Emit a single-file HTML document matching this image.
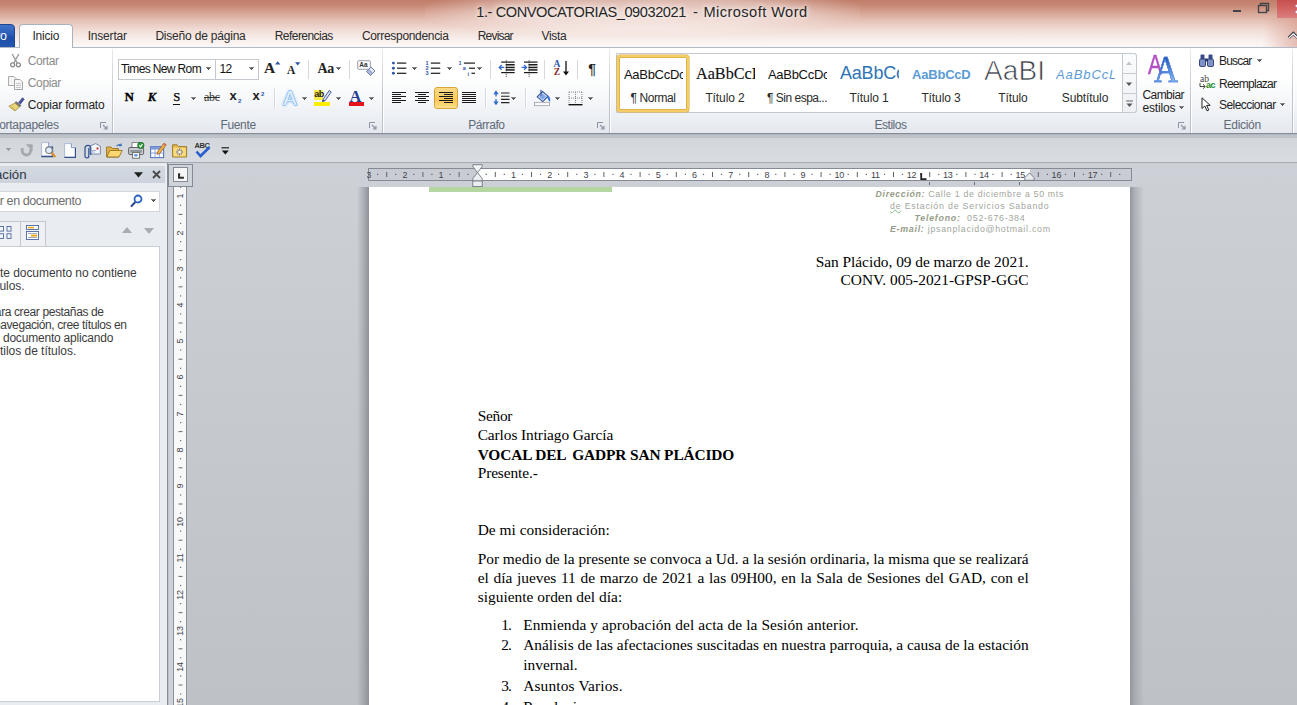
<!DOCTYPE html><html lang="es"><head><meta charset="utf-8"><title>1.- CONVOCATORIAS_09032021 - Microsoft Word</title><style>
*{box-sizing:border-box}
html,body{margin:0;padding:0}
body{width:1297px;height:705px;overflow:hidden;position:relative;background:#c8cbd1;font-family:"Liberation Sans",sans-serif;font-size:12px;color:#1e1e1e}
.a{position:absolute;white-space:nowrap}
.t{position:absolute;white-space:nowrap;line-height:14px;letter-spacing:-0.15px;margin-top:.4px}
.gl{position:absolute;white-space:nowrap;line-height:14px;color:#5f6a78;letter-spacing:0.1px}
.sep{position:absolute;width:1px;background:#d5d9df;box-shadow:1px 0 0 #fff}
.gsep{position:absolute;top:49px;width:1px;height:84px;background:linear-gradient(#e8ebef,#c3c8d0 50%,#b9bfc8);box-shadow:1px 0 0 #fff}
.dd{position:absolute;width:5px;height:3px;background:linear-gradient(#858585 0,#858585 1px,#555 1px);clip-path:polygon(0 0,5px 0,5px 1px,4px 1px,4px 2px,3px 2px,3px 3px,2px 3px,2px 2px,1px 2px,1px 1px,0 1px)}
.doc{position:absolute;white-space:nowrap;font-family:"Liberation Serif",serif;font-size:15.4px;line-height:20px;color:#000}
.hd{position:absolute;white-space:nowrap;font-family:"Liberation Sans",sans-serif;font-size:8.8px;line-height:12px;color:#a2a69e}
.hd b{font-style:italic;color:#969c88}
.rn{position:absolute;font-size:9px;line-height:10px;color:#3f434d;width:20px;text-align:center;letter-spacing:-0.2px}
.vn{position:absolute;font-size:9px;line-height:10px;color:#3f434d;width:20px;height:10px;text-align:center;transform:rotate(-90deg);transform-origin:50% 50%;letter-spacing:-0.2px}
.sty{position:absolute;top:55px;width:72px;height:56px;overflow:hidden}
.sty .s{position:absolute;left:7px;white-space:nowrap;overflow:hidden;width:59px}
.sty .n{position:absolute;left:0;width:72px;text-align:center;top:90px;line-height:14px;white-space:nowrap;letter-spacing:-0.1px;color:#2a2a2a}
.nav{position:absolute;white-space:nowrap;line-height:13px;color:#3c3c3c;font-size:12px;letter-spacing:-0.1px}
</style></head><body>
<div class="a" style="left:0;top:0;width:1297px;height:48px;background:linear-gradient(#c07d6a 0,#c88a77 6px,#d7a595 13px,#e6c3b8 21px,#f1ddd6 30px,#f8eeeb 39px,#fcf8f7 47px)"></div>
<div class="a" style="left:425px;top:-12px;width:435px;height:48px;background:radial-gradient(ellipse at center,rgba(255,255,255,.6) 0,rgba(255,255,255,.42) 45%,rgba(255,255,255,0) 75%)"></div>
<div class="a" style="left:1262px;top:18px;width:35px;height:29px;background:linear-gradient(90deg,rgba(214,150,135,0),rgba(214,150,135,.6))"></div>
<div class="a" style="left:476.3px;top:2px;font-size:14.6px;line-height:20px;color:#262626;text-shadow:0 0 5px rgba(255,255,255,.95),0 0 9px rgba(255,255,255,.7);letter-spacing:-0.435px;">1.- CONVOCATORIAS_09032021</div>
<div class="a" style="left:693px;top:2px;font-size:14.6px;line-height:20px;color:#262626;text-shadow:0 0 5px rgba(255,255,255,.95),0 0 9px rgba(255,255,255,.7)">-</div>
<div class="a" style="left:703.5px;top:2px;font-size:14.6px;line-height:20px;color:#262626;text-shadow:0 0 5px rgba(255,255,255,.95),0 0 9px rgba(255,255,255,.7);letter-spacing:0.439px;">Microsoft Word</div>
<div class="a" style="left:1277px;top:0;width:20px;height:18px;background:linear-gradient(#c74f4e,#d26766 55%,#d98080)"></div>
<div class="a" style="left:1293.5px;top:2px;font-size:14px;line-height:14px;color:#fff;font-weight:bold">✕</div>
<svg class="a" style="left:1230px;top:0" width="45" height="18" viewBox="0 0 45 18"><rect x="3" y="10" width="8" height="2" fill="#3f4348"/><rect x="28.5" y="5.5" width="8" height="7" fill="none" stroke="#3f4348" stroke-width="1.3"/><path d="M30.5 5.5V3.5H38.5V10.5H36.5" fill="none" stroke="#3f4348" stroke-width="1.3"/></svg>
<svg class="a" style="left:1287px;top:31px" width="10" height="9" viewBox="0 0 10 9"><path d="M1.8 6.8L6.3 2.4L10.8 6.8" fill="none" stroke="#3a3f46" stroke-width="3"/><path d="M2.2 6.7L6.3 2.8L10.4 6.7" fill="none" stroke="#fff" stroke-width="1.3"/></svg>
<div class="a" style="left:-30px;top:24px;width:45px;height:24px;border-radius:4px 4px 0 0;background:linear-gradient(#3f72c9,#2a5cb8 45%,#1d4ea6 55%,#2357b0);border:1px solid #1b4690"></div>
<div class="a" style="right:1290.3px;top:28.5px;font-size:12.5px;line-height:14px;color:#fff;letter-spacing:-.2px">Archivo</div>
<div class="a" style="left:0;top:47px;width:1297px;height:87px;background:linear-gradient(#fff 0,#fff 28px,#f4f6f9 55px,#e9ecf1 75px,#e4e8ee 86px);border-top:1px solid #b0b9c5;border-bottom:1px solid #868d97"></div>
<div class="a" style="left:19px;top:24px;width:54px;height:24px;background:#fff;border:1px solid #a9b2bf;border-bottom:none;border-radius:4px 4px 0 0"></div>
<div class="t" style="left:32.4px;top:29px;color:#2b2b2b;letter-spacing:-0.203px;">Inicio</div>
<div class="t" style="left:87.7px;top:29px;color:#2b2b2b;letter-spacing:-0.198px;">Insertar</div>
<div class="t" style="left:155.4px;top:29px;color:#2b2b2b;letter-spacing:-0.200px;">Diseño de página</div>
<div class="t" style="left:274.7px;top:29px;color:#2b2b2b;letter-spacing:-0.539px;">Referencias</div>
<div class="t" style="left:361.9px;top:29px;color:#2b2b2b;letter-spacing:-0.313px;">Correspondencia</div>
<div class="t" style="left:477.7px;top:29px;color:#2b2b2b;letter-spacing:-0.798px;">Revisar</div>
<div class="t" style="left:541.4px;top:29px;color:#2b2b2b;letter-spacing:-0.294px;">Vista</div>
<div class="t" style="left:27.8px;top:54px;color:#8c8c8c;letter-spacing:-0.424px;">Cortar</div>
<div class="t" style="left:27.8px;top:76px;color:#8c8c8c;letter-spacing:-0.377px;">Copiar</div>
<div class="t" style="left:27.8px;top:98px;letter-spacing:-0.191px;">Copiar formato</div>
<div class="gl" style="right:1238.4px;top:118px;letter-spacing:-.3px">Portapapeles</div>
<svg class="a" style="left:9px;top:53px" width="13" height="15" viewBox="0 0 13 15"><path d="M3.2 1L8.2 10M9.8 1L4.8 10" stroke="#9a9a9a" stroke-width="1.4" fill="none"/><circle cx="3.6" cy="11.8" r="2" fill="none" stroke="#8a8a8a" stroke-width="1.3"/><circle cx="9.4" cy="11.8" r="2" fill="none" stroke="#8a8a8a" stroke-width="1.3"/></svg>
<svg class="a" style="left:8px;top:76px" width="16" height="14" viewBox="0 0 16 14"><path d="M.5 .5H6L8.5 3V9.5H.5Z" fill="#f4f4f4" stroke="#aaa"/><path d="M6.5 3.5H12L14.5 6V13.5H6.5Z" fill="#f7f7f7" stroke="#a4a4a4"/><path d="M8 7.5H13M8 9.5H13M8 11.5H13" stroke="#bbb" stroke-width=".8"/></svg>
<svg class="a" style="left:8px;top:97px" width="17" height="15" viewBox="0 0 17 15"><path d="M10.5 5.5L14.5 .8L16.2 2.2L12.5 7Z" fill="#4b55a8" stroke="#2f3575" stroke-width=".6"/><path d="M8 4.5L13 8.5L11.5 10L7 6Z" fill="#777" stroke="#444" stroke-width=".5"/><path d="M7 6L11.3 10L7 14L.8 9.3Z" fill="#e9d27a" stroke="#9b8432" stroke-width=".7"/><path d="M3 9.5L7 12.8" stroke="#c4aa4e" stroke-width=".8"/></svg>
<svg class="a" style="left:100.0px;top:122px" width="8" height="8" viewBox="0 0 8 8"><path d="M.5 6V.5H6" fill="none" stroke="#8b93a0"/><path d="M3 3L6.5 6.5M7 3.8V7H3.8" fill="none" stroke="#8b93a0" stroke-width="1.1"/></svg>
<div class="gsep" style="left:112px"></div>
<div class="a" style="left:118px;top:58.5px;width:98px;height:21px;background:#fff;border:1px solid #c3c8cf"></div>
<div class="a" style="left:215px;top:58.5px;width:44px;height:21px;background:#fff;border:1px solid #c3c8cf"></div>
<div class="t" style="left:121px;top:62px;color:#111;letter-spacing:-0.633px;">Times New Rom</div>
<div class="t" style="left:219.5px;top:62px;color:#111;letter-spacing:-0.780px;">12</div>
<div class="dd" style="left:206px;top:67px"></div><div class="dd" style="left:249px;top:67px"></div>
<div class="a" style="left:264px;top:59px;font-family:'Liberation Serif',serif;font-weight:bold;font-size:15.5px;line-height:18px;color:#222">A</div>
<svg class="a" style="left:274.5px;top:60.5px" width="6" height="4"><path d="M0 3.5L2.7 .3L5.4 3.5Z" fill="#2d56a8"/></svg>
<div class="a" style="left:287px;top:62.5px;font-family:'Liberation Serif',serif;font-weight:bold;font-size:11.5px;line-height:14px;color:#222">A</div>
<svg class="a" style="left:295px;top:61.5px" width="6" height="4"><path d="M0 .3L2.7 3.5L5.4 .3Z" fill="#2d56a8"/></svg>
<div class="sep" style="left:308px;top:60px;height:19px"></div>
<div class="a" style="left:317.5px;top:60px;font-family:'Liberation Serif',serif;font-weight:bold;font-size:14px;line-height:17px;color:#222;letter-spacing:-.3px">Aa</div>
<div class="dd" style="left:336px;top:67px"></div>
<div class="sep" style="left:349px;top:60px;height:19px"></div>
<svg class="a" style="left:357px;top:60px" width="19" height="18" viewBox="0 0 19 18"><rect x=".7" y=".7" width="12.6" height="8.6" rx="1" fill="#fdfdfd" stroke="#8a93a5" stroke-width=".9"/><text x="2.3" y="7.3" font-family="Liberation Sans,sans-serif" font-size="6.5" font-weight="bold" fill="#333">Aa</text><path d="M9.5 11.5L14 7L18 11L13.5 15.5Z" fill="#e6ebf5" stroke="#5f6f96" stroke-width=".9"/><path d="M9.5 11.5L11.7 9.3L15.8 13.3L13.5 15.5Z" fill="#a9b8dc" stroke="#5f6f96" stroke-width=".6"/></svg>
<div class="a" style="left:124.8px;top:89.3px;font-family:'Liberation Serif',serif;font-weight:bold;font-size:12.6px;line-height:16px;color:#000;-webkit-text-stroke:.4px #000">N</div>
<div class="a" style="left:147.8px;top:89.3px;font-family:'Liberation Serif',serif;font-weight:bold;font-style:italic;font-size:12.6px;line-height:16px;color:#000;-webkit-text-stroke:.3px #000">K</div>
<div class="a" style="left:173.2px;top:89.3px;font-family:'Liberation Serif',serif;font-size:12.6px;line-height:16px;color:#000;-webkit-text-stroke:.25px #000;border-bottom:1px solid #111;height:15.6px">S</div>
<div class="dd" style="left:191px;top:97px"></div>
<div class="a" style="left:204px;top:89.5px;font-family:'Liberation Serif',serif;font-size:12px;line-height:15px;color:#333;text-decoration:line-through;letter-spacing:-.3px">abc</div>
<div class="a" style="left:229.5px;top:88px;font-weight:bold;font-size:13px;line-height:16px;color:#222">x</div><div class="a" style="left:238px;top:97.5px;font-weight:bold;font-size:6px;line-height:7px;color:#2d56a8">2</div>
<div class="a" style="left:252.5px;top:88px;font-weight:bold;font-size:13px;line-height:16px;color:#222">x</div><div class="a" style="left:261px;top:91px;font-weight:bold;font-size:6px;line-height:7px;color:#2d56a8">2</div>
<div class="sep" style="left:274px;top:88px;height:20px"></div>
<div class="a" style="left:283.3px;top:87px;font-size:20px;line-height:22px;color:#e4f0fd;-webkit-text-stroke:1px #5a9ce6;paint-order:stroke fill;text-shadow:0 0 2.5px #7fb8f5,0 0 3px #9ccbf8">A</div>
<div class="dd" style="left:302px;top:97px"></div>
<div class="a" style="left:314px;top:102px;width:16px;height:4px;background:#ffee00"></div>
<div class="a" style="left:314px;top:90px;width:9px;height:10px;background:#f7ec4a"></div><div class="a" style="left:314.3px;top:89px;font-size:9px;line-height:11px;color:#222;letter-spacing:-.5px;font-weight:bold">ab</div>
<svg class="a" style="left:321px;top:89px" width="11" height="13" viewBox="0 0 11 13"><path d="M2 10.5L8.2 1.5L10.2 3L4 11.8L1.5 12.5Z" fill="#dfe7f7" stroke="#33488a" stroke-width=".9"/><path d="M2 10.5L4 11.8L1.5 12.5Z" fill="#33488a"/></svg>
<div class="dd" style="left:336px;top:97px"></div>
<div class="a" style="left:349.5px;top:86.5px;font-family:'Liberation Serif',serif;font-weight:bold;font-size:16.5px;line-height:19px;color:#1f3d8c">A</div>
<div class="a" style="left:348.5px;top:102px;width:15.5px;height:4px;background:#e8121a"></div>
<div class="dd" style="left:369px;top:97px"></div>
<div class="gl" style="left:220.5px;top:118px;letter-spacing:-0.360px;">Fuente</div>
<svg class="a" style="left:369.0px;top:122px" width="8" height="8" viewBox="0 0 8 8"><path d="M.5 6V.5H6" fill="none" stroke="#8b93a0"/><path d="M3 3L6.5 6.5M7 3.8V7H3.8" fill="none" stroke="#8b93a0" stroke-width="1.1"/></svg>
<div class="gsep" style="left:381.5px"></div>
<svg class="a" style="left:390px;top:60px" width="18" height="16" viewBox="390 60 18 16"><g fill="#2d56a8"><circle cx="393.4" cy="63.1" r="1.45"/><circle cx="393.4" cy="68.2" r="1.45"/><circle cx="393.4" cy="73.3" r="1.45"/></g><rect x="397.0" y="62.5" width="9.3" height="1.2" fill="#1a1a1a"/><rect x="397.0" y="67.6" width="9.3" height="1.2" fill="#1a1a1a"/><rect x="397.0" y="72.7" width="9.3" height="1.2" fill="#1a1a1a"/></svg>
<div class="dd" style="left:412px;top:67px"></div>
<svg class="a" style="left:424px;top:59px" width="18" height="18" viewBox="424 59 18 18"><g font-family="Liberation Sans,sans-serif" font-size="5.6" font-weight="bold" fill="#2d56a8"><text x="425.6" y="65">1</text><text x="425.6" y="70.2">2</text><text x="425.6" y="75.4">3</text></g><rect x="430.8" y="62.5" width="9.4" height="1.2" fill="#1a1a1a"/><rect x="430.8" y="67.6" width="9.4" height="1.2" fill="#1a1a1a"/><rect x="430.8" y="72.7" width="9.4" height="1.2" fill="#1a1a1a"/></svg>
<div class="dd" style="left:447px;top:67px"></div>
<svg class="a" style="left:457px;top:59px" width="20" height="18" viewBox="457 59 20 18"><g font-family="Liberation Sans,sans-serif" font-size="5.4" font-weight="bold" fill="#2d56a8"><text x="458.6" y="65">1</text><text x="462.8" y="70.2">a</text><text x="467.6" y="75.6">i</text></g><rect x="463.9" y="62.5" width="11.1" height="1.2" fill="#1a1a1a"/><rect x="469.0" y="67.6" width="6.0" height="1.2" fill="#1a1a1a"/><rect x="471.5" y="72.7" width="3.5" height="1.2" fill="#1a1a1a"/></svg>
<div class="dd" style="left:477px;top:67px"></div>
<div class="sep" style="left:490px;top:60px;height:19px"></div>
<svg class="a" style="left:498px;top:59px" width="18" height="18" viewBox="498 59 18 18"><rect x="501.2" y="61.5" width="13.5" height="1.2" fill="#1a1a1a"/><rect x="505.7" y="64.0" width="9.0" height="1.5" fill="#1a1a1a"/><rect x="505.7" y="66.7" width="9.0" height="1.5" fill="#1a1a1a"/><rect x="505.7" y="69.2" width="9.0" height="1.5" fill="#1a1a1a"/><rect x="501.2" y="72.0" width="13.5" height="1.2" fill="#1a1a1a"/><path d="M506.3 60.3V77" stroke="#222" stroke-width=".9" stroke-dasharray="1 1"/><path d="M504.3 67.4H499.5M501.7 65L499.3 67.4L501.7 69.8" stroke="#2d6ad0" stroke-width="1.3" fill="none"/></svg>
<svg class="a" style="left:521px;top:59px" width="18" height="18" viewBox="521 59 18 18"><rect x="524.0" y="61.5" width="13.5" height="1.2" fill="#1a1a1a"/><rect x="528.5" y="64.0" width="9.0" height="1.5" fill="#1a1a1a"/><rect x="528.5" y="66.7" width="9.0" height="1.5" fill="#1a1a1a"/><rect x="528.5" y="69.2" width="9.0" height="1.5" fill="#1a1a1a"/><rect x="524.0" y="72.0" width="13.5" height="1.2" fill="#1a1a1a"/><path d="M529.1 60.3V77" stroke="#222" stroke-width=".9" stroke-dasharray="1 1"/><path d="M521.5 67.4H526.3M524.1 65L526.5 67.4L524.1 69.8" stroke="#2d6ad0" stroke-width="1.3" fill="none"/></svg>
<div class="sep" style="left:544px;top:60px;height:19px"></div>
<div class="a" style="left:553.5px;top:59.5px;font-family:'Liberation Serif',serif;font-weight:bold;font-size:9.5px;line-height:9px;color:#2d56a8">A</div><div class="a" style="left:553.8px;top:67.5px;font-family:'Liberation Serif',serif;font-weight:bold;font-size:9.5px;line-height:9px;color:#8c2b2b">Z</div>
<svg class="a" style="left:562px;top:61px" width="8" height="16" viewBox="0 0 8 16"><path d="M4 0V13" stroke="#111" stroke-width="1.3"/><path d="M1 10.5L4 14.5L7 10.5Z" fill="#111"/></svg>
<div class="sep" style="left:577px;top:60px;height:19px"></div>
<div class="a" style="left:588.3px;top:60px;font-size:14.5px;line-height:18px;color:#222;-webkit-text-stroke:.12px #222">¶</div>
<div class="a" style="left:434.2px;top:87px;width:24px;height:21.6px;border-radius:3px;border:1px solid #d9a437;background:linear-gradient(#fbd98a,#fccf66 45%,#fbc650 55%,#fde08f)"></div>
<svg class="a" style="left:392.0px;top:92px" width="14" height="12" viewBox="0 0 14 12"><rect x="0.0" y="0.0" width="14" height="1" fill="#1a1a1a"/><rect x="0.0" y="2.0" width="9" height="1" fill="#1a1a1a"/><rect x="0.0" y="4.0" width="14" height="1" fill="#1a1a1a"/><rect x="0.0" y="6.0" width="9" height="1" fill="#1a1a1a"/><rect x="0.0" y="8.0" width="14" height="1" fill="#1a1a1a"/><rect x="0.0" y="10.0" width="9" height="1" fill="#1a1a1a"/></svg>
<svg class="a" style="left:415.0px;top:92px" width="14" height="12" viewBox="0 0 14 12"><rect x="0.0" y="0.0" width="14" height="1" fill="#1a1a1a"/><rect x="3.0" y="2.0" width="8" height="1" fill="#1a1a1a"/><rect x="0.0" y="4.0" width="14" height="1" fill="#1a1a1a"/><rect x="3.0" y="6.0" width="8" height="1" fill="#1a1a1a"/><rect x="0.0" y="8.0" width="14" height="1" fill="#1a1a1a"/><rect x="3.0" y="10.0" width="8" height="1" fill="#1a1a1a"/></svg>
<svg class="a" style="left:439.0px;top:92px" width="14" height="12" viewBox="0 0 14 12"><rect x="0.0" y="0.0" width="14" height="1" fill="#1a1a1a"/><rect x="5.0" y="2.0" width="9" height="1" fill="#1a1a1a"/><rect x="0.0" y="4.0" width="14" height="1" fill="#1a1a1a"/><rect x="5.0" y="6.0" width="9" height="1" fill="#1a1a1a"/><rect x="0.0" y="8.0" width="14" height="1" fill="#1a1a1a"/><rect x="5.0" y="10.0" width="9" height="1" fill="#1a1a1a"/></svg>
<svg class="a" style="left:462.0px;top:92px" width="14" height="12" viewBox="0 0 14 12"><rect x="0.0" y="0.0" width="14" height="1" fill="#1a1a1a"/><rect x="0.0" y="2.0" width="14" height="1" fill="#1a1a1a"/><rect x="0.0" y="4.0" width="14" height="1" fill="#1a1a1a"/><rect x="0.0" y="6.0" width="14" height="1" fill="#1a1a1a"/><rect x="0.0" y="8.0" width="14" height="1" fill="#1a1a1a"/><rect x="0.0" y="10.0" width="14" height="1" fill="#1a1a1a"/></svg>
<div class="sep" style="left:484.5px;top:88px;height:20px"></div>
<svg class="a" style="left:493px;top:90px" width="17" height="16" viewBox="0 0 17 16"><path d="M3 1.5V6.6M3 9V14" stroke="#2d6ad0" stroke-width="1.3"/><path d="M.3 4.2L3 .6L5.7 4.2Z M.3 11.6L3 15.2L5.7 11.6Z" fill="#2d6ad0"/><path d="M8 3H16.5M8 6.2H16.5M8 9.4H16.5M8 12.6H16.5" stroke="#222" stroke-width="1.1"/></svg>
<div class="dd" style="left:511px;top:97px"></div>
<div class="sep" style="left:525px;top:88px;height:20px"></div>
<svg class="a" style="left:533.5px;top:89px" width="18" height="18" viewBox="0 0 18 18"><rect x=".5" y="13.3" width="15" height="3.4" fill="#fafafa" stroke="#9aa0a8" stroke-width=".8"/><path d="M3.2 7.8L8.6 2.6L14 7.2L8.8 12.6Z" fill="#dfe8f8" stroke="#2f4f9a" stroke-width="1.1"/><path d="M5 8L8.6 4.4L12 7.4L8.7 10.8Z" fill="#7fa6e6"/><path d="M7 .8V6.8" stroke="#2f4f9a" stroke-width="1.1"/><path d="M13.2 6.2C15.8 7.2 16.8 9.8 16 12.8C14.2 11.4 13.4 9.2 13.2 6.2Z" fill="#2f6fe0"/></svg>
<div class="dd" style="left:555px;top:97px"></div>
<svg class="a" style="left:568px;top:91px" width="15" height="15" viewBox="0 0 15 15"><path d="M1 1H14M1 1V13M14 1V13M7.5 1V13M1 7H14" stroke="#777" stroke-width=".9" stroke-dasharray="1 1" fill="none"/><path d="M.5 13.7H14.5" stroke="#111" stroke-width="1.4"/></svg>
<div class="dd" style="left:588px;top:97px"></div>
<div class="gl" style="left:468.3px;top:118px;letter-spacing:-0.451px;">Párrafo</div>
<svg class="a" style="left:597.0px;top:122px" width="8" height="8" viewBox="0 0 8 8"><path d="M.5 6V.5H6" fill="none" stroke="#8b93a0"/><path d="M3 3L6.5 6.5M7 3.8V7H3.8" fill="none" stroke="#8b93a0" stroke-width="1.1"/></svg>
<div class="gsep" style="left:609px"></div>
<div class="a" style="left:616px;top:53px;width:520.5px;height:59.5px;background:#fff;border:1px solid #c5cad1;border-radius:0 3px 3px 0"></div>
<div class="a" style="left:617px;top:55px;width:72px;height:56.5px;border:2px solid #f3cd68;border-radius:3px;box-shadow:0 0 0 1px #e3b348 inset,0 0 0 .5px #d9a83e;background:#fff"></div>
<div class="sty" style="left:617px"><div class="s" style="top:12.0px;font-size:13px;line-height:16px;color:#111;letter-spacing:-.3px">AaBbCcDc</div><div class="n" style="top:36px;letter-spacing:-0.45px">¶ Normal</div></div>
<div class="sty" style="left:689px"><div class="s" style="top:9.0px;font-family:'Liberation Serif',serif;font-size:16.2px;line-height:20px;color:#111;letter-spacing:0px;-webkit-text-stroke:.12px #111">AaBbCcDd</div><div class="n" style="top:36px;letter-spacing:-0.10px">Título 2</div></div>
<div class="sty" style="left:761px"><div class="s" style="top:12.0px;font-size:13px;line-height:16px;color:#111;letter-spacing:-.3px">AaBbCcDc</div><div class="n" style="top:36px;letter-spacing:-0.50px">¶ Sin espa...</div></div>
<div class="sty" style="left:833px"><div class="s" style="top:7.0px;font-size:18px;line-height:22px;color:#2e74b5;letter-spacing:-.2px">AaBbCc</div><div class="n" style="top:36px;letter-spacing:-0.10px">Título 1</div></div>
<div class="sty" style="left:905px"><div class="s" style="top:12.0px;font-size:13px;line-height:16px;color:#5b9bd5;font-weight:bold;letter-spacing:-.2px">AaBbCcD</div><div class="n" style="top:36px;letter-spacing:-0.10px">Título 3</div></div>
<div class="sty" style="left:977px"><div class="s" style="top:0.6px;font-size:28px;line-height:30px;color:#3a3f47;letter-spacing:.1px;-webkit-text-stroke:.7px #fff">AaBI</div><div class="n" style="top:36px;letter-spacing:-0.10px">Título</div></div>
<div class="sty" style="left:1049px"><div class="s" style="top:12.0px;font-size:13px;line-height:16px;color:#5b9bd5;font-style:italic;letter-spacing:.9px">AaBbCcL</div><div class="n" style="top:36px;letter-spacing:-0.10px">Subtítulo</div></div>
<div class="a" style="left:1122px;top:53px;width:14.5px;height:59.5px;border:1px solid #c5cad1;border-radius:0 3px 3px 0;background:linear-gradient(#fbfcfd,#eef0f4)"></div>
<div class="a" style="left:1123px;top:73px;width:13px;height:1px;background:#c5cad1"></div><div class="a" style="left:1123px;top:93px;width:13px;height:1px;background:#c5cad1"></div>
<svg class="a" style="left:1126px;top:61px" width="7" height="5"><path d="M0 4L3 .5L6 4Z" fill="#c0c4ca"/></svg>
<svg class="a" style="left:1126px;top:81.5px" width="7" height="5"><path d="M0 .5L3 4L6 .5Z" fill="#555"/></svg>
<svg class="a" style="left:1126px;top:99.5px" width="8" height="9"><path d="M0 1H7" stroke="#666" stroke-width="1"/><path d="M.5 3.4L3.5 6.9L6.5 3.4Z" fill="#555"/></svg>
<div class="a" style="left:1148px;top:49.6px;font-size:27px;line-height:30px;color:#b14fc2;-webkit-text-stroke:.5px #b14fc2;transform:scaleX(.78);transform-origin:0 0">A</div>
<div class="a" style="left:1153.6px;top:50px;font-family:'Liberation Serif',serif;font-size:37px;line-height:40px;color:#3d74d2;-webkit-text-stroke:.5px #4178d4;transform:scaleX(.9);transform-origin:0 0;background:linear-gradient(160deg,#2c5fc4 30%,#7fb0f0 75%);-webkit-background-clip:text;background-clip:text;-webkit-text-fill-color:transparent">A</div>
<div class="t" style="left:1142.4px;top:88px;letter-spacing:-0.537px;">Cambiar</div>
<div class="t" style="left:1142.4px;top:101px;letter-spacing:-0.145px;">estilos</div>
<div class="dd" style="left:1179px;top:106px"></div>
<div class="gl" style="left:874.5px;top:118px;letter-spacing:-0.478px;">Estilos</div>
<svg class="a" style="left:1177.7px;top:122px" width="8" height="8" viewBox="0 0 8 8"><path d="M.5 6V.5H6" fill="none" stroke="#8b93a0"/><path d="M3 3L6.5 6.5M7 3.8V7H3.8" fill="none" stroke="#8b93a0" stroke-width="1.1"/></svg>
<div class="gsep" style="left:1190px"></div>
<svg class="a" style="left:1199px;top:54px" width="15" height="13" viewBox="0 0 15 13"><rect x="1.5" y=".5" width="4" height="5" rx="1" fill="#3a4a8c"/><rect x="9.5" y=".5" width="4" height="5" rx="1" fill="#3a4a8c"/><rect x=".5" y="5" width="6" height="7.5" rx="1.3" fill="#7f92c8" stroke="#2a3770" stroke-width=".9"/><rect x="8.5" y="5" width="6" height="7.5" rx="1.3" fill="#7f92c8" stroke="#2a3770" stroke-width=".9"/><rect x="6" y="4.5" width="3" height="3" fill="#2a3770"/></svg>
<div class="t" style="left:1219px;top:54px;letter-spacing:-0.810px;">Buscar</div><div class="dd" style="left:1257px;top:59px"></div>
<div class="a" style="left:1200px;top:74.5px;font-family:'Liberation Serif',serif;font-size:9.5px;line-height:9px;color:#444">ab</div><div class="a" style="left:1206px;top:81px;font-size:9px;line-height:9px;color:#1f8a2c;font-weight:bold;letter-spacing:-.4px">ac</div>
<svg class="a" style="left:1199px;top:82.5px" width="8" height="7"><path d="M1 0V3.5H6M4 1.3L6.3 3.5L4 5.7" fill="none" stroke="#444" stroke-width="1"/></svg>
<div class="t" style="left:1219px;top:76.5px;letter-spacing:-0.740px;">Reemplazar</div>
<svg class="a" style="left:1201px;top:97px" width="11" height="15" viewBox="0 0 11 15"><path d="M1 .8V11.5L3.8 9L6 13.8L7.8 13L5.6 8.4H9.2Z" fill="#fff" stroke="#222" stroke-width="1"/></svg>
<div class="t" style="left:1219px;top:98px;letter-spacing:-0.546px;">Seleccionar</div><div class="dd" style="left:1280px;top:103px"></div>
<div class="gl" style="left:1223.6px;top:118px;letter-spacing:-0.308px;">Edición</div>
<div class="gsep" style="left:1291.5px"></div>
<div class="a" style="left:0;top:134px;width:1297px;height:4px;background:linear-gradient(#a9afb7,#bdc2c9 30%,#c1c5cc 80%,#b2b7bf)"></div>
<div class="a" style="left:0;top:138px;width:1297px;height:24px;background:linear-gradient(#d3d7dd,#d6dadf 60%,#d9dce1)"></div>
<div class="a" style="left:0;top:162px;width:1297px;height:1px;background:#a3a9b1"></div>
<div class="dd" style="left:6px;top:148px;background:#9a9ea4"></div>
<svg class="a" style="left:20px;top:143.5px" width="13" height="13" viewBox="0 0 13 13"><path d="M2.2 4V6.8A4.2 4.2 0 0 0 10.6 6.8V5" fill="none" stroke="#a6a9af" stroke-width="2.8"/><path d="M5.6 .2H12.6V7.2Z" fill="#a6a9af"/></svg>
<svg class="a" style="left:41px;top:142px" width="16" height="17" viewBox="0 0 16 17"><path d="M.6 .6H7.6L11.4 4.4V14.4H.6Z" fill="#fdfdfe" stroke="#aebbd6" stroke-width="1"/><path d="M.4 14.5H11.5V4.6" fill="none" stroke="#34508c" stroke-width="1.3"/><path d="M7.6 .6V4.4H11.4" fill="#e4eaf5" stroke="#6d82b3" stroke-width=".8"/><circle cx="8" cy="8.2" r="3.3" fill="#e3edf9" stroke="#77808c" stroke-width="1.2"/><path d="M10.6 10.9L14.3 15" stroke="#e0922e" stroke-width="2.4"/></svg>
<svg class="a" style="left:64px;top:142.5px" width="12" height="15" viewBox="0 0 12 15"><path d="M.6 .6H7.4L11.4 4.6V14.4H.6Z" fill="#fdfdfe" stroke="#aebbd6" stroke-width="1"/><path d="M.4 14.5H11.5V4.8" fill="none" stroke="#34508c" stroke-width="1.3"/><path d="M7.4 .6V4.6H11.4" fill="#e4eaf5" stroke="#6d82b3" stroke-width=".8"/></svg>
<svg class="a" style="left:83.5px;top:142.5px" width="17" height="16" viewBox="0 0 17 16"><path d="M6 3.2L11.5 .6L16.4 3.2V11H6Z" fill="#f4f6fa" stroke="#6d7fa8" stroke-width=".9"/><rect x="12.5" y="4.5" width="2" height="2" fill="#d0302b"/><path d="M8 7.5H12M8 9H11" stroke="#9aa5bf" stroke-width=".8"/><path d="M4.8 5V13A1.9 1.9 0 0 1 1 13V5.2A2.9 2.9 0 0 1 6.8 5.2V12" fill="none" stroke="#2f4f8f" stroke-width="1.2"/></svg>
<svg class="a" style="left:106px;top:142.5px" width="17" height="15" viewBox="0 0 17 15"><path d="M.6 14V4H5L6.5 5.5H12.5V14Z" fill="#e2b24a" stroke="#96701e" stroke-width=".9"/><path d="M.8 14L3.8 7.5H16.2L13 14Z" fill="#fbd772" stroke="#96701e" stroke-width=".9"/><path d="M10.5 3.3C11.8 1.4 13.6 1.2 15 2.4M15.2 .4V2.8H12.8" fill="none" stroke="#3f6fc0" stroke-width="1.1"/></svg>
<svg class="a" style="left:128px;top:142px" width="17" height="17" viewBox="0 0 17 17"><rect x="4" y=".6" width="8" height="6" fill="#fff" stroke="#777" stroke-width=".9"/><rect x=".6" y="5.5" width="15" height="7" rx="1.2" fill="#c9cdd3" stroke="#555" stroke-width=".9"/><rect x="2.2" y="8" width="11.6" height="2.6" fill="#8f959d"/><rect x="4.6" y="10.6" width="7" height="5.6" fill="#fff" stroke="#666" stroke-width=".9"/><rect x="6.2" y="12.3" width="3.4" height="2" fill="#4d8be0"/><circle cx="12.8" cy="3.4" r="3.2" fill="#2f9a3a" stroke="#176222" stroke-width=".7"/><path d="M11.2 3.4L12.5 4.8L14.5 2.2" fill="none" stroke="#fff" stroke-width="1.1"/></svg>
<svg class="a" style="left:150px;top:142px" width="17" height="17" viewBox="0 0 17 17"><rect x=".6" y="4.6" width="13" height="11" fill="#fff" stroke="#5674b8" stroke-width="1.1"/><rect x=".6" y="4.6" width="13" height="3" fill="#7c9ad6"/><path d="M.6 11H13.6M5 7.6V15.6M9.3 7.6V15.6" stroke="#7c9ad6" stroke-width=".9"/><path d="M7.5 9.8L14 1.2L16.2 2.8L9.8 11.4L7 12.3Z" fill="#f0b24a" stroke="#9a5a1a" stroke-width=".8"/><path d="M14 1.2L16.2 2.8L15.2 4.1L13 2.5Z" fill="#e06a5a"/></svg>
<svg class="a" style="left:172px;top:144px" width="16" height="14" viewBox="0 0 16 14"><path d="M.6 13V.8H5L6.5 2.6H14.6V13Z" fill="#e8bb55" stroke="#96701e" stroke-width=".9"/><rect x="1.4" y="3.8" width="12.4" height="8.5" fill="#fbdb7c"/><path d="M7.6 4.4V11.6M4 8H11.2M5.2 5.6L10 10.4M10 5.6L5.2 10.4" stroke="#3347ad" stroke-width=".8"/><circle cx="7.6" cy="8" r="1.5" fill="#fff7c8"/></svg>
<div class="a" style="left:194.5px;top:141.5px;font-size:7.5px;line-height:8px;font-weight:bold;color:#333;letter-spacing:-.4px">ABC</div>
<svg class="a" style="left:195px;top:146px" width="16" height="12" viewBox="0 0 16 12"><path d="M1.5 5.5L5.5 10L14.5 1.2" fill="none" stroke="#2b5fd0" stroke-width="2.6"/></svg>
<svg class="a" style="left:220.5px;top:147px" width="9" height="8"><path d="M.5 .8H8" stroke="#111" stroke-width="1.1"/><path d="M.8 3.6L4.3 7.4L7.8 3.6Z" fill="#111"/></svg>
<div class="a" style="left:0;top:163px;width:1297px;height:542px;background:linear-gradient(#cdd0d6,#c6c9ce 45%,#bec1c6)"></div>
<div class="a" style="left:0;top:163px;width:168px;height:542px;background:#e9ecf0;border-right:1px solid #858c96"></div>
<div class="a" style="left:168.5px;top:163px;width:5px;height:542px;background:#ced2d8"></div>
<div class="a" style="left:0;top:166px;width:165px;height:17px;background:linear-gradient(#d3d9e1,#ccd3dc)"></div>
<div class="a" style="right:1270.5px;top:166.8px;font-size:13.2px;line-height:16px;color:#2f3540">Navegación</div>
<svg class="a" style="left:134px;top:171.5px" width="10" height="6"><path d="M0 .3H9L4.5 5.6Z" fill="#1e1e1e"/></svg>
<svg class="a" style="left:151.5px;top:170px" width="9" height="9" viewBox="0 0 9 9"><path d="M1 1L8 8M8 1L1 8" stroke="#4a4a4a" stroke-width="1.9"/></svg>
<div class="a" style="left:-5px;top:190.5px;width:165px;height:21px;background:#fff;border:1px solid #d3d7dd"></div>
<div class="a" style="right:1216px;top:193.8px;font-size:12.6px;line-height:15px;color:#6e6e6e;letter-spacing:-.45px">Buscar en documento</div>
<svg class="a" style="left:129.5px;top:193.5px" width="13" height="14" viewBox="0 0 13 14"><circle cx="8" cy="5" r="3.5" fill="#fff" stroke="#2b62c0" stroke-width="1.8"/><path d="M5.3 8L1 12.6" stroke="#27418a" stroke-width="2"/></svg>
<div class="dd" style="left:151px;top:199px"></div>
<div class="a" style="left:-5px;top:220.5px;width:51px;height:26px;border:1px solid #c3c8d0;border-bottom:none;background:#eef0f4"></div><div class="a" style="left:19.5px;top:221px;width:1px;height:25px;background:#c3c8d0"></div>
<svg class="a" style="left:-2px;top:225.5px" width="14" height="13" viewBox="0 0 14 13"><g fill="#f4f7fc" stroke="#4a67a0" stroke-width=".9"><rect x="1.5" y=".5" width="4" height="4.6"/><rect x="9" y=".5" width="4" height="4.6"/><rect x="1.5" y="7.8" width="4" height="4.6"/><rect x="9" y="7.8" width="4" height="4.6"/></g></svg>
<svg class="a" style="left:26px;top:225px" width="14" height="15" viewBox="0 0 14 15"><rect x=".5" y=".5" width="12" height="4" fill="#fff" stroke="#4a67a0" stroke-width=".9"/><rect x="2" y="1.8" width="6" height="1.6" fill="#f0a818"/><rect x=".5" y="6.5" width="12" height="8" fill="#fff" stroke="#4a67a0" stroke-width=".9"/><path d="M2 8.5H11M2 12.5H11" stroke="#8a9ab8" stroke-width=".8"/><rect x="5" y="9.6" width="6" height="2" fill="#f0a818"/></svg>
<svg class="a" style="left:121.5px;top:227px" width="10" height="6"><path d="M0 6L5 0L10 6Z" fill="#a9adb3"/></svg>
<svg class="a" style="left:143.5px;top:227.5px" width="10" height="6"><path d="M0 0L5 6L10 0Z" fill="#a9adb3"/></svg>
<div class="a" style="left:-5px;top:245.5px;width:165px;height:456px;background:#fff;border:1px solid #c9ced5"></div>
<div class="nav" style="right:1160.3px;top:267.1px;letter-spacing:-0.06px">Este documento no contiene</div>
<div class="nav" style="right:1272.5px;top:280.2px;letter-spacing:-0.07px">títulos.</div>
<div class="nav" style="right:1193.4px;top:306.2px;letter-spacing:-0.38px">Para crear pestañas de</div>
<div class="nav" style="right:1170.4px;top:318.8px;letter-spacing:-0.40px">navegación, cree títulos en</div>
<div class="nav" style="right:1183.8px;top:331.8px;letter-spacing:-0.20px">el documento aplicando</div>
<div class="nav" style="right:1220.8px;top:345.2px;letter-spacing:-0.03px">estilos de títulos.</div>
<div class="a" style="left:173px;top:186px;width:14.2px;height:519px;background:#f8f8f8;border-left:1px solid #8b929c;border-right:1px solid #8b929c"></div>
<div class="a" style="left:168.4px;top:163.5px;width:24.3px;height:23px;background:#cfd4da;border:1px solid #838a94"></div>
<div class="a" style="left:173px;top:167.1px;width:14.7px;height:14.6px;background:#f6f6f6;border:1px solid #848b95"></div>
<svg class="a" style="left:178px;top:173px" width="7" height="7"><path d="M1.1 .2V4.7H5.9" fill="none" stroke="#2a2a2a" stroke-width="2"/></svg>
<div class="vn" style="left:170px;top:191.3px">1</div>
<div class="vn" style="left:170px;top:227.5px">2</div>
<div class="vn" style="left:170px;top:263.7px">3</div>
<div class="vn" style="left:170px;top:299.9px">4</div>
<div class="vn" style="left:170px;top:336.1px">5</div>
<div class="vn" style="left:170px;top:372.3px">6</div>
<div class="vn" style="left:170px;top:408.5px">7</div>
<div class="vn" style="left:170px;top:444.7px">8</div>
<div class="vn" style="left:170px;top:480.9px">9</div>
<div class="vn" style="left:170px;top:517.1px">10</div>
<div class="vn" style="left:170px;top:553.3px">11</div>
<div class="vn" style="left:170px;top:589.5px">12</div>
<div class="vn" style="left:170px;top:625.7px">13</div>
<div class="vn" style="left:170px;top:661.9px">14</div>
<div class="vn" style="left:170px;top:698.1px">15</div>
<svg class="a" style="left:173.5px;top:187px" width="13" height="518"><rect x="6" y="-0.3" width="1.2" height="1.2" fill="#666b75"/><rect x="6" y="17.7" width="1.2" height="1.2" fill="#666b75"/><rect x="4.5" y="26.9" width="4" height="1" fill="#666b75"/><rect x="6" y="35.8" width="1.2" height="1.2" fill="#666b75"/><rect x="6" y="54.0" width="1.2" height="1.2" fill="#666b75"/><rect x="4.5" y="63.1" width="4" height="1" fill="#666b75"/><rect x="6" y="72.0" width="1.2" height="1.2" fill="#666b75"/><rect x="6" y="90.2" width="1.2" height="1.2" fill="#666b75"/><rect x="4.5" y="99.3" width="4" height="1" fill="#666b75"/><rect x="6" y="108.3" width="1.2" height="1.2" fill="#666b75"/><rect x="6" y="126.4" width="1.2" height="1.2" fill="#666b75"/><rect x="4.5" y="135.5" width="4" height="1" fill="#666b75"/><rect x="6" y="144.5" width="1.2" height="1.2" fill="#666b75"/><rect x="6" y="162.5" width="1.2" height="1.2" fill="#666b75"/><rect x="4.5" y="171.7" width="4" height="1" fill="#666b75"/><rect x="6" y="180.7" width="1.2" height="1.2" fill="#666b75"/><rect x="6" y="198.8" width="1.2" height="1.2" fill="#666b75"/><rect x="4.5" y="207.9" width="4" height="1" fill="#666b75"/><rect x="6" y="216.9" width="1.2" height="1.2" fill="#666b75"/><rect x="6" y="235.0" width="1.2" height="1.2" fill="#666b75"/><rect x="4.5" y="244.1" width="4" height="1" fill="#666b75"/><rect x="6" y="253.0" width="1.2" height="1.2" fill="#666b75"/><rect x="6" y="271.1" width="1.2" height="1.2" fill="#666b75"/><rect x="4.5" y="280.3" width="4" height="1" fill="#666b75"/><rect x="6" y="289.2" width="1.2" height="1.2" fill="#666b75"/><rect x="6" y="307.4" width="1.2" height="1.2" fill="#666b75"/><rect x="4.5" y="316.5" width="4" height="1" fill="#666b75"/><rect x="6" y="325.5" width="1.2" height="1.2" fill="#666b75"/><rect x="6" y="343.5" width="1.2" height="1.2" fill="#666b75"/><rect x="4.5" y="352.7" width="4" height="1" fill="#666b75"/><rect x="6" y="361.6" width="1.2" height="1.2" fill="#666b75"/><rect x="6" y="379.8" width="1.2" height="1.2" fill="#666b75"/><rect x="4.5" y="388.9" width="4" height="1" fill="#666b75"/><rect x="6" y="397.9" width="1.2" height="1.2" fill="#666b75"/><rect x="6" y="416.0" width="1.2" height="1.2" fill="#666b75"/><rect x="4.5" y="425.1" width="4" height="1" fill="#666b75"/><rect x="6" y="434.0" width="1.2" height="1.2" fill="#666b75"/><rect x="6" y="452.1" width="1.2" height="1.2" fill="#666b75"/><rect x="4.5" y="461.3" width="4" height="1" fill="#666b75"/><rect x="6" y="470.2" width="1.2" height="1.2" fill="#666b75"/><rect x="6" y="488.4" width="1.2" height="1.2" fill="#666b75"/><rect x="4.5" y="497.5" width="4" height="1" fill="#666b75"/><rect x="6" y="506.5" width="1.2" height="1.2" fill="#666b75"/></svg>
<div class="a" style="left:368px;top:168px;width:764px;height:13px;background:#c9cdd3;border:1px solid #858b95"></div>
<div class="a" style="left:477.5px;top:169px;width:552px;height:11px;background:#fff"></div>
<div class="rn" style="left:394.8px;top:169.5px">2</div>
<div class="rn" style="left:431.0px;top:169.5px">1</div>
<div class="rn" style="left:503.4px;top:169.5px">1</div>
<div class="rn" style="left:539.6px;top:169.5px">2</div>
<div class="rn" style="left:575.8px;top:169.5px">3</div>
<div class="rn" style="left:612.0px;top:169.5px">4</div>
<div class="rn" style="left:648.2px;top:169.5px">5</div>
<div class="rn" style="left:684.4px;top:169.5px">6</div>
<div class="rn" style="left:720.6px;top:169.5px">7</div>
<div class="rn" style="left:756.8px;top:169.5px">8</div>
<div class="rn" style="left:793.0px;top:169.5px">9</div>
<div class="rn" style="left:829.2px;top:169.5px">10</div>
<div class="rn" style="left:865.4px;top:169.5px">11</div>
<div class="rn" style="left:901.6px;top:169.5px">12</div>
<div class="rn" style="left:937.8px;top:169.5px">13</div>
<div class="rn" style="left:974.0px;top:169.5px">14</div>
<div class="rn" style="left:1010.2px;top:169.5px">15</div>
<div class="rn" style="left:1046.4px;top:169.5px">16</div>
<div class="rn" style="left:1082.6px;top:169.5px">17</div>
<svg class="a" style="left:368px;top:168px" width="764" height="13"><rect x="9.0" y="5.8" width="1.2" height="1.2" fill="#5d626c"/><rect x="18.2" y="4" width="1" height="5" fill="#5d626c"/><rect x="27.1" y="5.8" width="1.2" height="1.2" fill="#5d626c"/><rect x="45.2" y="5.8" width="1.2" height="1.2" fill="#5d626c"/><rect x="54.4" y="4" width="1" height="5" fill="#5d626c"/><rect x="63.3" y="5.8" width="1.2" height="1.2" fill="#5d626c"/><rect x="81.5" y="5.8" width="1.2" height="1.2" fill="#5d626c"/><rect x="90.6" y="4" width="1" height="5" fill="#5d626c"/><rect x="99.5" y="5.8" width="1.2" height="1.2" fill="#5d626c"/><rect x="117.7" y="5.8" width="1.2" height="1.2" fill="#5d626c"/><rect x="126.8" y="4" width="1" height="5" fill="#5d626c"/><rect x="135.7" y="5.8" width="1.2" height="1.2" fill="#5d626c"/><rect x="153.9" y="5.8" width="1.2" height="1.2" fill="#5d626c"/><rect x="163.0" y="4" width="1" height="5" fill="#5d626c"/><rect x="171.9" y="5.8" width="1.2" height="1.2" fill="#5d626c"/><rect x="190.0" y="5.8" width="1.2" height="1.2" fill="#5d626c"/><rect x="199.2" y="4" width="1" height="5" fill="#5d626c"/><rect x="208.2" y="5.8" width="1.2" height="1.2" fill="#5d626c"/><rect x="226.3" y="5.8" width="1.2" height="1.2" fill="#5d626c"/><rect x="235.4" y="4" width="1" height="5" fill="#5d626c"/><rect x="244.4" y="5.8" width="1.2" height="1.2" fill="#5d626c"/><rect x="262.4" y="5.8" width="1.2" height="1.2" fill="#5d626c"/><rect x="271.6" y="4" width="1" height="5" fill="#5d626c"/><rect x="280.5" y="5.8" width="1.2" height="1.2" fill="#5d626c"/><rect x="298.6" y="5.8" width="1.2" height="1.2" fill="#5d626c"/><rect x="307.8" y="4" width="1" height="5" fill="#5d626c"/><rect x="316.8" y="5.8" width="1.2" height="1.2" fill="#5d626c"/><rect x="334.9" y="5.8" width="1.2" height="1.2" fill="#5d626c"/><rect x="344.0" y="4" width="1" height="5" fill="#5d626c"/><rect x="352.9" y="5.8" width="1.2" height="1.2" fill="#5d626c"/><rect x="371.1" y="5.8" width="1.2" height="1.2" fill="#5d626c"/><rect x="380.2" y="4" width="1" height="5" fill="#5d626c"/><rect x="389.1" y="5.8" width="1.2" height="1.2" fill="#5d626c"/><rect x="407.2" y="5.8" width="1.2" height="1.2" fill="#5d626c"/><rect x="416.4" y="4" width="1" height="5" fill="#5d626c"/><rect x="425.4" y="5.8" width="1.2" height="1.2" fill="#5d626c"/><rect x="443.4" y="5.8" width="1.2" height="1.2" fill="#5d626c"/><rect x="452.6" y="4" width="1" height="5" fill="#5d626c"/><rect x="461.6" y="5.8" width="1.2" height="1.2" fill="#5d626c"/><rect x="479.6" y="5.8" width="1.2" height="1.2" fill="#5d626c"/><rect x="488.8" y="4" width="1" height="5" fill="#5d626c"/><rect x="497.8" y="5.8" width="1.2" height="1.2" fill="#5d626c"/><rect x="515.9" y="5.8" width="1.2" height="1.2" fill="#5d626c"/><rect x="525.0" y="4" width="1" height="5" fill="#5d626c"/><rect x="533.9" y="5.8" width="1.2" height="1.2" fill="#5d626c"/><rect x="552.1" y="5.8" width="1.2" height="1.2" fill="#5d626c"/><rect x="561.2" y="4" width="1" height="5" fill="#5d626c"/><rect x="570.1" y="5.8" width="1.2" height="1.2" fill="#5d626c"/><rect x="588.2" y="5.8" width="1.2" height="1.2" fill="#5d626c"/><rect x="597.4" y="4" width="1" height="5" fill="#5d626c"/><rect x="606.4" y="5.8" width="1.2" height="1.2" fill="#5d626c"/><rect x="624.4" y="5.8" width="1.2" height="1.2" fill="#5d626c"/><rect x="633.6" y="4" width="1" height="5" fill="#5d626c"/><rect x="642.6" y="5.8" width="1.2" height="1.2" fill="#5d626c"/><rect x="660.6" y="5.8" width="1.2" height="1.2" fill="#5d626c"/><rect x="669.8" y="4" width="1" height="5" fill="#5d626c"/><rect x="678.8" y="5.8" width="1.2" height="1.2" fill="#5d626c"/><rect x="696.9" y="5.8" width="1.2" height="1.2" fill="#5d626c"/><rect x="706.0" y="4" width="1" height="5" fill="#5d626c"/><rect x="714.9" y="5.8" width="1.2" height="1.2" fill="#5d626c"/><rect x="733.1" y="5.8" width="1.2" height="1.2" fill="#5d626c"/><rect x="742.2" y="4" width="1" height="5" fill="#5d626c"/><rect x="751.1" y="5.8" width="1.2" height="1.2" fill="#5d626c"/></svg>
<div class="a" style="left:366.6px;top:169px;width:10px;height:11px;overflow:hidden"><div class="rn" style="left:-8px;top:.5px">3</div></div>
<svg class="a" style="left:472px;top:164px" width="11" height="24" viewBox="0 0 11 24"><path d="M.8 .7H10.2V2.5L5.5 8.6L.8 2.5Z" fill="#f4f5f7" stroke="#6f757e" stroke-width=".9"/><path d="M5.5 8.6L10.2 14.5V17H.8V14.5Z" fill="#eceef1" stroke="#6f757e" stroke-width=".9"/><rect x=".8" y="17" width="9.4" height="5.6" fill="#eceef1" stroke="#6f757e" stroke-width=".9"/></svg>
<svg class="a" style="left:1024px;top:172px" width="11" height="9" viewBox="0 0 11 9"><path d="M5.5 .8L10.2 5.8V8.3H.8V5.8Z" fill="#eceef1" stroke="#6f757e" stroke-width=".9"/></svg>
<svg class="a" style="left:919.5px;top:173px" width="7" height="8"><path d="M1.2 0V6.2H6.5" fill="none" stroke="#222" stroke-width="1.8"/></svg>
<div class="a" style="left:929.0px;top:182px;width:1px;height:3px;background:#6a6f78"></div>
<div class="a" style="left:973.7px;top:182px;width:1px;height:3px;background:#6a6f78"></div>
<div class="a" style="left:1018.8px;top:182px;width:1px;height:3px;background:#6a6f78"></div>
<div class="a" style="left:357px;top:187px;width:12px;height:518px;background:linear-gradient(90deg,rgba(150,154,160,0),rgba(140,144,150,.55) 60%,#8e9298)"></div>
<div class="a" style="left:1130px;top:187px;width:14px;height:518px;background:linear-gradient(90deg,#93979d,rgba(150,154,160,.55) 35%,rgba(160,164,170,0))"></div>
<div class="a" style="left:369px;top:187px;width:761px;height:518px;background:#fff"></div>
<div class="a" style="left:429px;top:187px;width:183px;height:5px;background:#b4d6a0"></div>
<div class="hd" style="left:875.5px;top:188.1px;letter-spacing:0.666px;"><b>Dirección:</b> Calle 1 de diciembre a 50 mts</div>
<div class="hd" style="left:890.0px;top:200.0px;letter-spacing:0.796px;"><span style="text-decoration:underline wavy #7fb87f .6px;text-underline-offset:0px">de</span> Estación de Servicios Sabando</div>
<div class="hd" style="left:914.5px;top:211.5px;letter-spacing:0.766px;"><b>Telefono:</b>&nbsp; 052-676-384</div>
<div class="hd" style="left:890.0px;top:222.8px;letter-spacing:0.742px;"><b>E-mail:</b> jpsanplacido@hotmail.com</div>
<div class="doc" id="d0" style="left:815.7px;top:252.1px;letter-spacing:-0.025px;">San Plácido, 09 de marzo de 2021.</div>
<div class="doc" id="d1" style="left:840.6px;top:270.4px;letter-spacing:0.006px;">CONV. 005-2021-GPSP-GGC</div>
<div class="doc" id="d2" style="left:477.7px;top:405.8px;letter-spacing:-0.284px;">Señor</div>
<div class="doc" id="d3" style="left:477.7px;top:424.8px;letter-spacing:-0.096px;">Carlos Intriago García</div>
<div class="doc" id="d4" style="left:477.7px;top:444.8px;font-weight:bold;letter-spacing:-0.128px;">VOCAL DEL<span style="margin-left:2px"> </span>GADPR SAN PLÁCIDO</div>
<div class="doc" id="d5" style="left:477.7px;top:463.3px;letter-spacing:-0.113px;">Presente.-</div>
<div class="doc" id="d6" style="left:477.7px;top:520.0px;letter-spacing:0.018px;">De mi consideración:</div>
<div class="doc" id="d7" style="left:477.7px;top:548.8px;word-spacing:-0.042px;">Por medio de la presente se convoca a Ud. a la sesión ordinaria, la misma que se realizará</div>
<div class="doc" id="d8" style="left:477.7px;top:568.0px;word-spacing:0.844px;">el día jueves 11 de marzo de 2021 a las 09H00, en la Sala de Sesiones del GAD, con el</div>
<div class="doc" id="d9" style="left:477.7px;top:587.3px;letter-spacing:0.019px;">siguiente orden del día:</div>
<div class="doc" id="d10" style="left:501.2px;top:615.4px;letter-spacing:-0.773px;">1.</div>
<div class="doc" id="d11" style="left:523.2px;top:615.4px;letter-spacing:0.097px;">Enmienda y aprobación del acta de la Sesión anterior.</div>
<div class="doc" id="d12" style="left:501.2px;top:635.4px;letter-spacing:-0.773px;">2.</div>
<div class="doc" id="d13" style="left:523.2px;top:635.4px;word-spacing:-0.004px;">Análisis de las afectaciones suscitadas en nuestra parroquia, a causa de la estación</div>
<div class="doc" id="d14" style="left:523.2px;top:655.1px;letter-spacing:0.024px;">invernal.</div>
<div class="doc" id="d15" style="left:501.2px;top:676.1px;letter-spacing:-0.773px;">3.</div>
<div class="doc" id="d16" style="left:523.2px;top:676.1px;letter-spacing:0.153px;">Asuntos Varios.</div>
<div class="doc" id="d17" style="left:501.2px;top:697.2px;letter-spacing:-0.773px;">4.</div>
<div class="doc" id="d18" style="left:523.2px;top:697.2px;letter-spacing:0.006px;">Resoluciones.</div>
</body></html>
